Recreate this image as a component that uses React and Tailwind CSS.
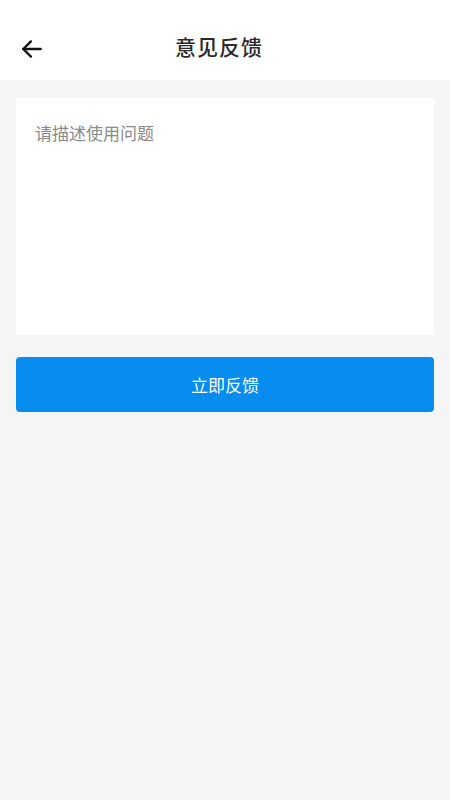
import { useState } from "react";

const font = { fontFamily: '"Noto Sans CJK SC", "Noto Sans", sans-serif' };

function BackArrow() {
  return (
    <svg width="26" height="26" viewBox="0 0 24 24" fill="none" stroke="#111" strokeWidth="2.2" strokeLinecap="round" strokeLinejoin="round">
      <path d="M20 12H4" />
      <path d="M11 5l-7 7 7 7" />
    </svg>
  );
}

export default function App() {
  const [text, setText] = useState("");

  return (
    <div className="flex min-h-[800px] w-[450px] flex-col bg-[#f5f5f5]" style={font}>
      <header className="relative flex h-[80px] items-center justify-center bg-white pr-[12px]">
        <button type="button" className="absolute left-[19px] top-[36px]" aria-label="返回">
          <BackArrow />
        </button>
        <h1 className="mt-[14px] text-[21px] font-medium tracking-[1px] text-[#2a2a2a]">意见反馈</h1>
      </header>

      <div className="flex flex-col px-[16px] pt-[18px]">
        <textarea
          className="h-[237px] w-full resize-none bg-white px-[19px] py-[22px] text-[17px] text-[#333] outline-none placeholder:text-[#8a8a8a]"
          placeholder="请描述使用问题"
          value={text}
          onChange={(event) => setText(event.target.value)}
          style={font}
        />
        <button
          type="button"
          className="mt-[22px] flex h-[55px] w-full items-center justify-center rounded-[4px] bg-[#078cf0] text-[17px] text-white"
        >
          立即反馈
        </button>
      </div>
    </div>
  );
}
